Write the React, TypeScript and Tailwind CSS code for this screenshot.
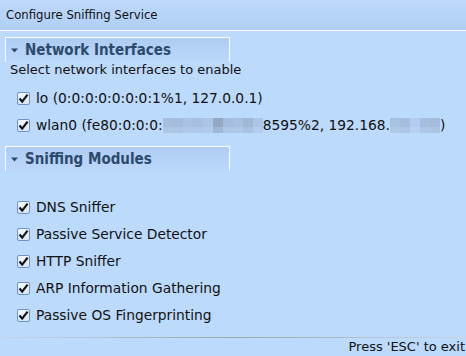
import React from "react";

const COND = { fontFamily: '"DejaVu Sans Condensed", "DejaVu Sans", sans-serif' };

function Check() {
  return (
    <span className="w-[13px] h-[13px] rounded-[2px] border border-[#6f95c8] bg-gradient-to-b from-[#f4f8fe] to-[#d6e4f6] flex items-center justify-center shrink-0">
      <svg width="11" height="11" viewBox="0 0 11 11">
        <path d="M1.5 5.5 L4.2 8.6 L9.6 1.6" fill="none" stroke="#111" strokeWidth="2.2" strokeLinejoin="miter" />
      </svg>
    </span>
  );
}

function Row({ children, mt }: { children: React.ReactNode; mt: string }) {
  return (
    <div className={`flex items-center gap-[6px] pl-[17px] h-[14px] text-[13.8px] ${mt}`}>
      <Check />
      <div className="whitespace-nowrap flex items-center">{children}</div>
    </div>
  );
}

function Header({ title }: { title: string }) {
  return (
    <div className="ml-[5px] w-[225px] h-[25px] border-t border-l border-r border-white bg-gradient-to-b from-[#aecbf2] to-[#bcd9fc] flex items-center pl-[5px] gap-[7px]">
      <svg width="7" height="5" viewBox="0 0 7 5">
        <path d="M0 0.5 L7 0.5 L3.5 4.5 Z" fill="#2c4a6c" />
      </svg>
      <span className="font-bold text-[15px] text-[#2c4a6c]" style={COND}>{title}</span>
    </div>
  );
}

function Blur({ cells }: { cells: string[] }) {
  return (
    <span className="inline-flex flex-col">
      <span className="flex h-[9px]">
        {cells.map((c, i) => (
          <span key={i} className="w-[10px] h-[9px]" style={{ background: c }} />
        ))}
      </span>
      <span className="flex h-[6px]">
        {cells.map((c, i) => (
          <span key={i} className="w-[10px] h-[6px] opacity-70" style={{ background: c }} />
        ))}
      </span>
    </span>
  );
}

export default function App() {
  return (
    <div
      className="w-[466px] h-[356px] bg-[#bcdafc] text-[#111] text-[13px] flex flex-col overflow-hidden"
      style={{ fontFamily: '"DejaVu Sans", sans-serif' }}
    >
      <div className="h-[30px] bg-gradient-to-b from-[#bddafc] to-[#b0cef4] flex items-center pl-[6px] text-[13px]" style={COND}>
        Configure Sniffing Service
      </div>
      <div className="h-px bg-white" />
      <div className="mt-[6px]">
        <Header title="Network Interfaces" />
      </div>
      <div className="pl-[10px] h-[16px] flex items-center">Select network interfaces to enable</div>
      <Row mt="mt-[13px]">lo (0:0:0:0:0:0:0:1%1, 127.0.0.1)</Row>
      <Row mt="mt-[13px]">
        <span>wlan0 (fe80:0:0:0:</span>
        <Blur cells={["#a7bfde", "#a4bddc", "#a8c2e2", "#a7c0df", "#abc5e6", "#93a8c4", "#a5bedd", "#a8c1e1", "#9fb8d6", "#abc6e8"]} />
        <span>8595%2, 192.168.</span>
        <Blur cells={["#a8c1e0", "#a5bedc", "#b2cdef", "#a6bfde", "#a4bcda"]} />
        <span>)</span>
      </Row>
      <div className="mt-[14px]">
        <Header title="Sniffing Modules" />
      </div>
      <Row mt="mt-[29px]">DNS Sniffer</Row>
      <Row mt="mt-[13px]">Passive Service Detector</Row>
      <Row mt="mt-[13px]">HTTP Sniffer</Row>
      <Row mt="mt-[13px]">ARP Information Gathering</Row>
      <Row mt="mt-[13px]">Passive OS Fingerprinting</Row>
      <div className="flex-1" />
      <div className="h-px bg-gradient-to-r from-[#c8d4e2] via-[#9aa4b0] to-[#c8d4e2]" />
      <div className="h-[18px] flex items-center justify-end pr-[1px]">Press 'ESC' to exit</div>
    </div>
  );
}
